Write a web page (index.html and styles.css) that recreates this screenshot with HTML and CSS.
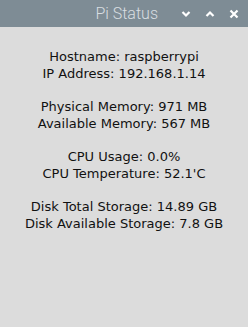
FILE: index.html
```html
<!DOCTYPE html>
<html lang="en">
<head>
  <meta charset="UTF-8" />
  <title>Pi Status</title>
  <link rel="stylesheet" href="styles.css">
</head>
<body>
  <div class="window">
    <div class="titlebar">
      <span class="title">Pi Status</span>
      <div class="controls">
        <svg class="btn" width="10" height="8" viewBox="0 0 10 8"><path d="M1.5 2 L5 5.5 L8.5 2" fill="none" stroke="#fff" stroke-width="2.2"/></svg>
        <svg class="btn" width="10" height="8" viewBox="0 0 10 8"><path d="M1.5 6 L5 2.5 L8.5 6" fill="none" stroke="#fff" stroke-width="2.2"/></svg>
        <svg class="btn" width="10" height="10" viewBox="0 0 10 10"><path d="M1.5 1.5 L8.5 8.5 M8.5 1.5 L1.5 8.5" fill="none" stroke="#fff" stroke-width="2.2"/></svg>
      </div>
    </div>

    <div class="info">Hostname: raspberrypi
IP Address: 192.168.1.14

Physical Memory: 971 MB
Available Memory: 567 MB

CPU Usage: 0.0%
CPU Temperature: 52.1'C

Disk Total Storage: 14.89 GB
Disk Available Storage: 7.8 GB</div>
  </div>
</body>
</html>
```

FILE: styles.css
```css
body {
  margin: 0;
  background: #dcdcdc;
}

.window {
  width: 248px;
  height: 327px;
  background: #dcdcdc;
}

.titlebar {
  height: 27px;
  background: #7e8c95;
  display: flex;
  align-items: center;
  justify-content: flex-end;
  padding-right: 9px;
  box-sizing: border-box;
}

.title {
  font-family: Roboto, "Liberation Sans", sans-serif;
  font-weight: 300;
  font-size: 16px;
  color: #d9dee1;
  margin-right: 23px;
}

.controls {
  display: flex;
  align-items: center;
  gap: 14px;
}

.btn {
  display: block;
}

.info {
  font-family: "DejaVu Sans", sans-serif;
  font-size: 13px;
  line-height: 16.67px;
  color: #111;
  text-align: center;
  white-space: pre-line;
  padding-top: 22px;
}
```
